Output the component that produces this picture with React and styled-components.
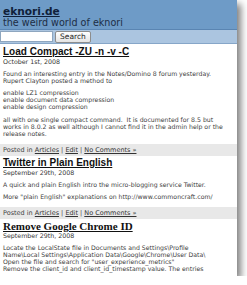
import React from 'react';
import styled, { createGlobalStyle } from 'styled-components';

const posts = [
  {
    title: 'Load Compact -ZU -n -v -C',
    date: 'October 1st, 2008',
    paragraphs: [
      ['Found an interesting entry in the Notes/Domino 8 forum yesterday.', 'Rupert Clayton posted a method to'],
      ['enable LZ1 compression', 'enable document data compression', 'enable design compression'],
      [
        'all with one single compact command.  It is documented for 8.5 but',
        'works in 8.0.2 as well although I cannot find it in the admin help or the',
        'release notes.',
      ],
    ],
  },
  {
    title: 'Twitter in Plain English',
    date: 'September 29th, 2008',
    paragraphs: [
      ['A quick and plain English intro the micro-blogging service Twitter.'],
      ['More "plain English" explanations on http://www.commoncraft.com/'],
    ],
  },
  {
    title: 'Remove Google Chrome ID',
    serif: true,
    date: 'September 29th, 2008',
    paragraphs: [
      [
        'Locate the LocalState file in Documents and Settings\\Profile',
        'Name\\Local Settings\\Application Data\\Google\\Chrome\\User Data\\',
        'Open the file and search for "user_experience_metrics"',
        'Remove the client_id and client_id_timestamp value. The entries',
      ],
    ],
    noFooter: true,
  },
];

const App = () => {
  return (
    <>
      <GlobalStyle />
      <Page>
        <Header>
          <SiteName href="#">eknori.de</SiteName>
          <Tagline>the weird world of eknori</Tagline>
        </Header>
        <SearchBar>
          <SearchInput type="text" />
          <SearchButton type="button">Search</SearchButton>
        </SearchBar>
        <Content>
          {posts.map((post) => (
            <Post key={post.title}>
              <PostTitle $serif={post.serif}>
                <a href="#">{post.title}</a>
              </PostTitle>
              <PostDate>{post.date}</PostDate>
              {post.paragraphs.map((lines, i) => (
                <Paragraph key={i}>
                  {lines.map((line) => (
                    <Line key={line}>{line}</Line>
                  ))}
                </Paragraph>
              ))}
              {!post.noFooter && (
                <PostMeta>
                  Posted in <a href="#">Articles</a> | <a href="#">Edit</a> | <a href="#">No Comments »</a>
                </PostMeta>
              )}
            </Post>
          ))}
        </Content>
      </Page>
    </>
  );
};

export default App;

const GlobalStyle = createGlobalStyle`
  html, body {
    margin: 0;
    padding: 0;
    background: #ffffff;
    overflow: hidden;
  }
`;

const Page = styled.div`
  width: 237px;
  height: 276px;
  overflow: hidden;
  background: #ffffff;
  box-shadow: 4px 4px 7px rgba(0, 0, 0, 0.5);
  font-family: "DejaVu Sans", Verdana, sans-serif;
  color: #3a3a3a;
`;

const Header = styled.div`
  height: 30px;
  box-sizing: border-box;
  padding: 5px 0 0 3px;
  background: #6e9bc7;
  border-bottom: 1px solid #5a85b2;
`;

const SiteName = styled.a`
  display: block;
  font-size: 10.6px;
  line-height: 12px;
  font-weight: bold;
  color: #10213a;
  text-decoration: underline;
`;

const Tagline = styled.div`
  font-size: 9.6px;
  line-height: 11px;
  color: #1d2d45;
`;

const SearchBar = styled.div`
  height: 13px;
  display: flex;
  align-items: center;
  gap: 2px;
  background: #abc5e0;
  border-bottom: 1px solid #86a6c8;
`;

const SearchInput = styled.input`
  box-sizing: border-box;
  width: 53px;
  height: 11px;
  margin: 0;
  padding: 0;
  border: 1px solid #8ea6bf;
  background: #ffffff;
`;

const SearchButton = styled.button`
  box-sizing: border-box;
  width: 36px;
  height: 12px;
  margin: 0;
  padding: 0;
  border: 1px solid #8d8d8d;
  border-radius: 2px;
  background: linear-gradient(#ffffff, #e4e4e4);
  font-family: "DejaVu Sans", Verdana, sans-serif;
  font-size: 7.5px;
  line-height: 10px;
  color: #222222;
`;

const Content = styled.div`
  padding: 2px 0 0 3px;
`;

const Post = styled.div`
  & + & {
    margin-top: 1px;
  }
`;

const PostTitle = styled.h2`
  margin: 0;
  font-family: ${(p) => (p.$serif ? '"Liberation Serif", "Times New Roman", serif' : '"Liberation Sans", Arial, sans-serif')};
  font-size: ${(p) => (p.$serif ? '11px' : '10px')};
  line-height: 12px;
  font-weight: bold;
  white-space: nowrap;

  a {
    color: #111111;
    text-decoration: underline;
  }
`;

const PostDate = styled.div`
  font-size: 6.3px;
  line-height: 7px;
  color: #333333;
`;

const Paragraph = styled.p`
  margin: 4.5px 0 0;
  font-size: 6.2px;
  line-height: 7.2px;
  color: #3d3d3d;

  & + & {
    margin-top: 5px;
  }
`;

const Line = styled.span`
  display: block;
  white-space: pre;
`;

const PostMeta = styled.div`
  margin: 7px 0 0 -3px;
  padding-left: 3px;
  height: 12px;
  box-sizing: border-box;
  font-size: 6.5px;
  line-height: 12px;
  background: #e8e8e8;
  color: #444444;
  white-space: nowrap;

  a {
    color: #333333;
    text-decoration: underline;
  }
`;
